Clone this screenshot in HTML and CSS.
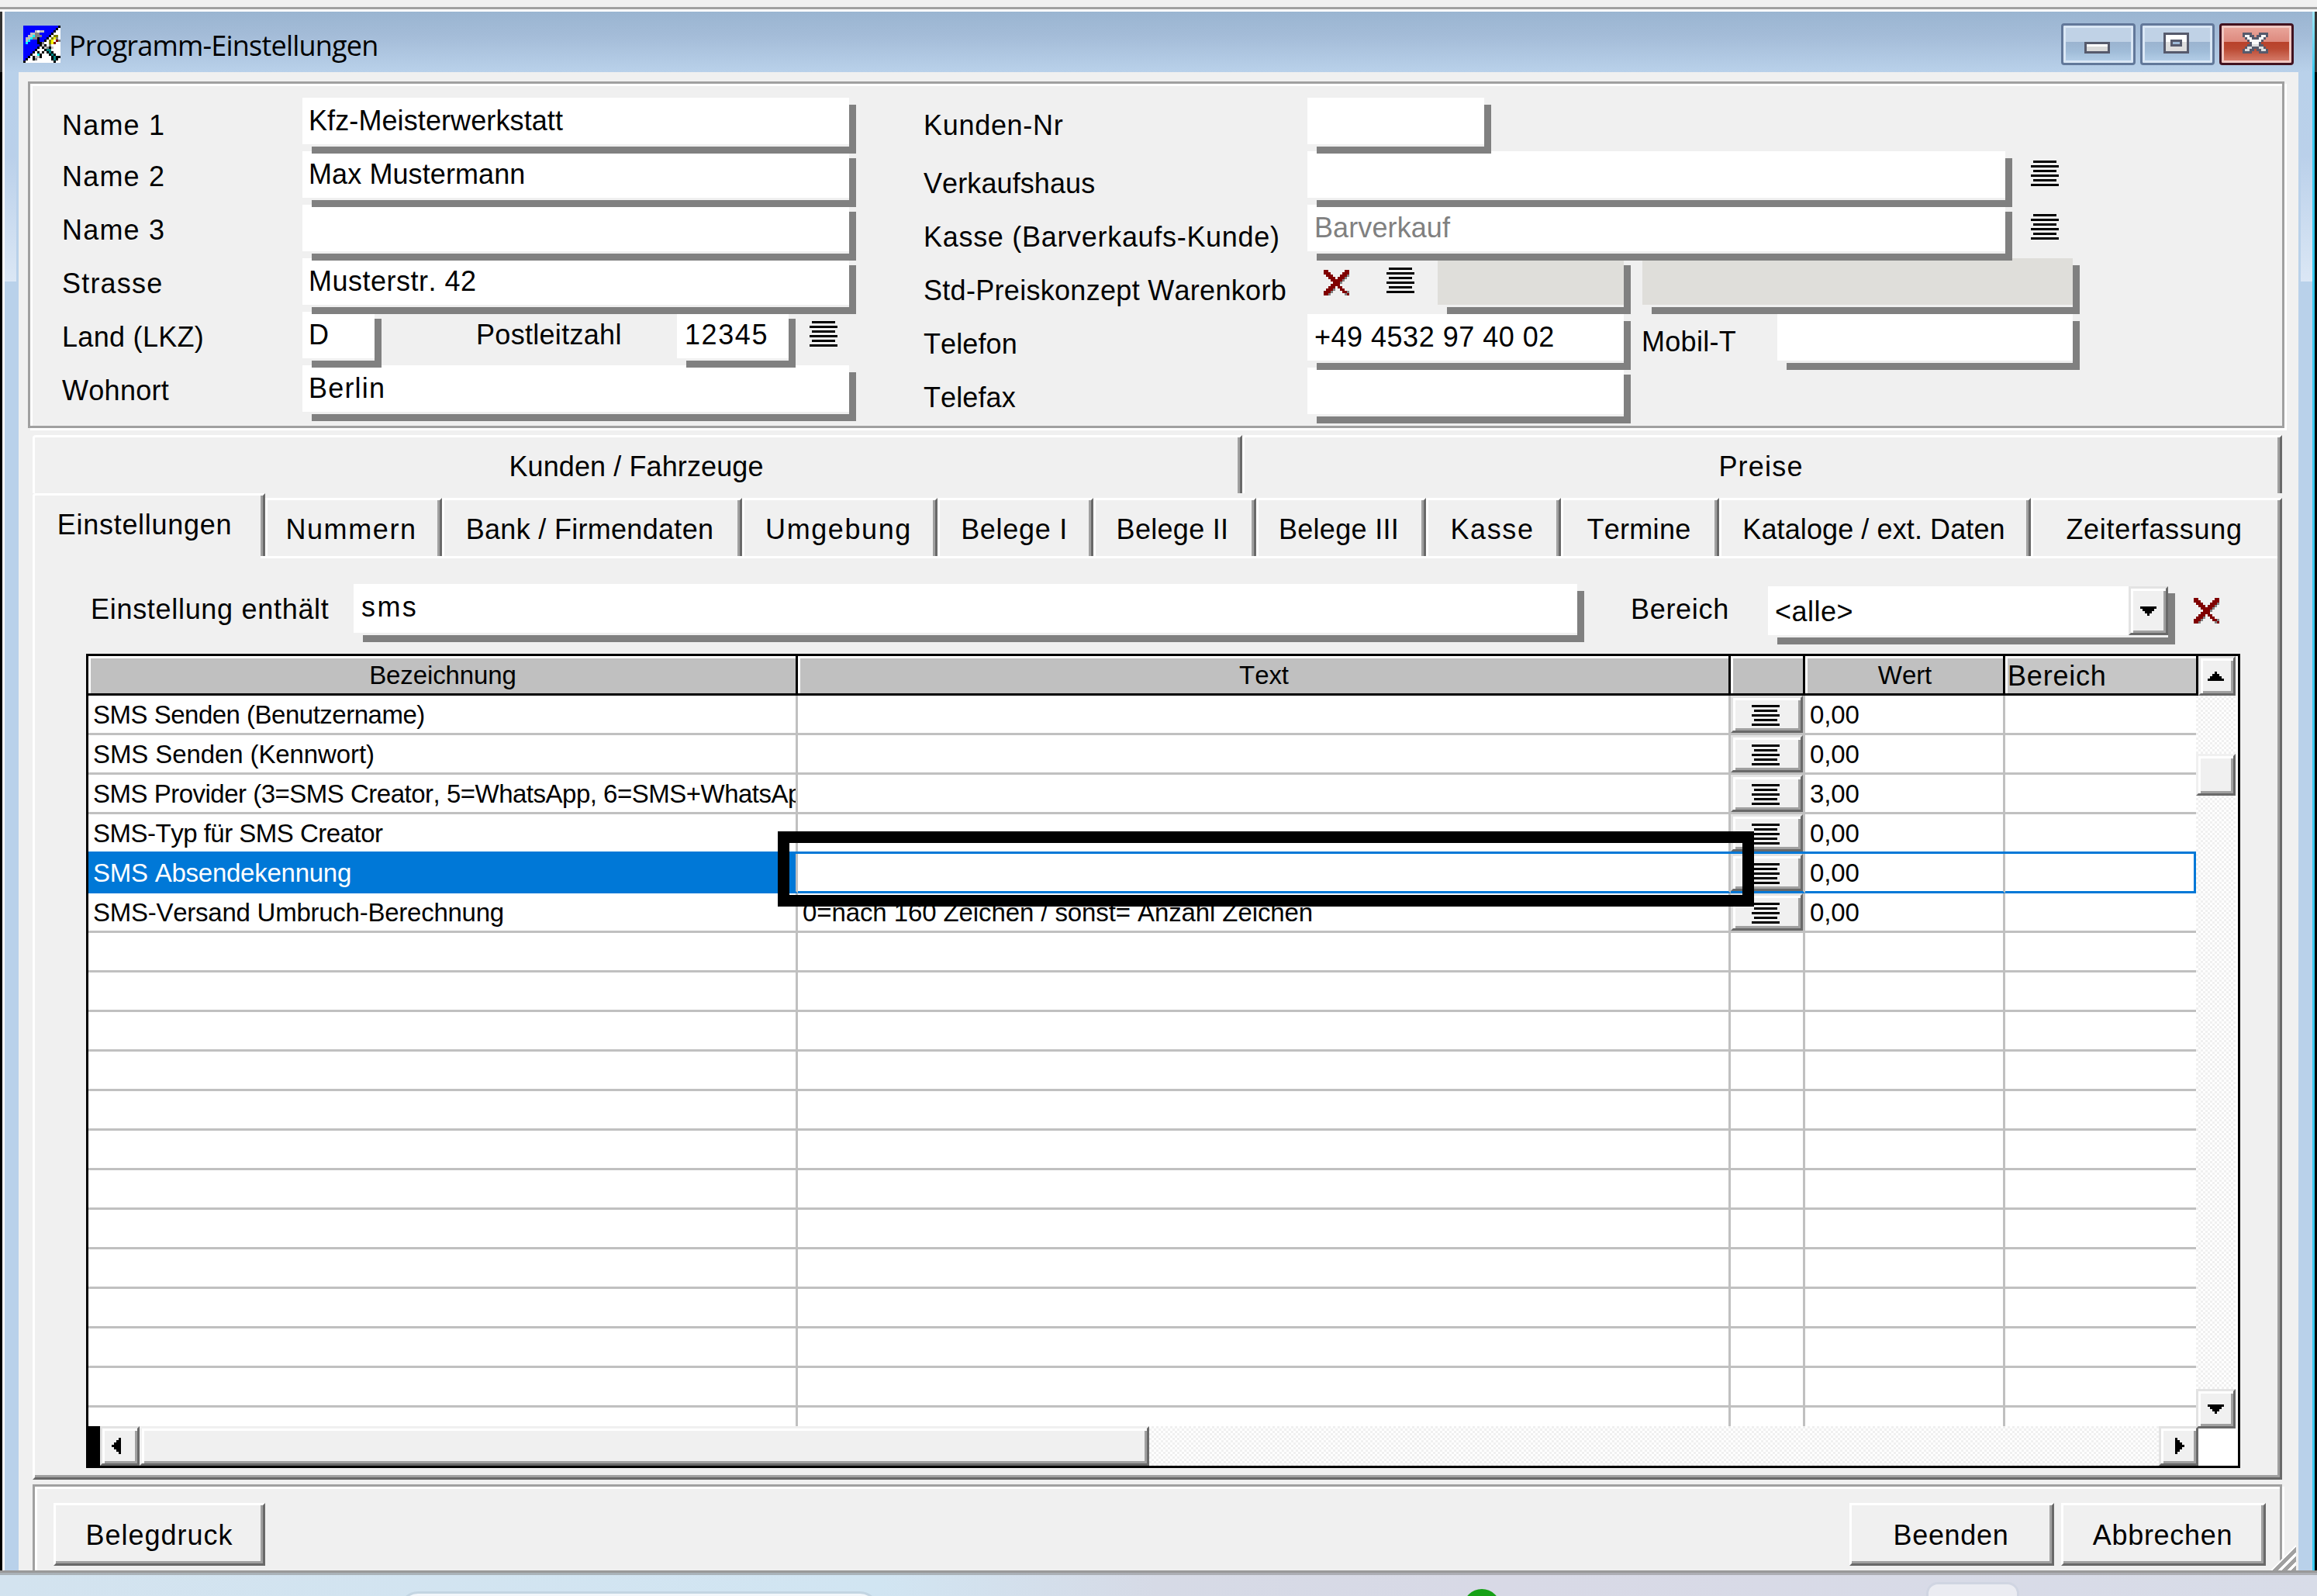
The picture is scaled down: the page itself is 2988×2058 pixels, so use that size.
FILE: index.html
```html
<!DOCTYPE html>
<html lang="de">
    <head>
        <meta charset="utf-8">
        <title>Programm-Einstellungen</title>
        <link rel="stylesheet" href="styles.css">
    </head>
    <body>
        <svg class="defs" width="0" height="0">
            <symbol id="list" viewBox="0 0 12 11">
                <path d="M1 0h10v1H1zM0 2h12v1H0zM1 4h10v1H1zM0 6h12v1H0zM1 8h10v1H1zM0 10h12v1H0z"/>
            </symbol>
            <symbol id="list5" viewBox="0 0 12 9">
                <path d="M0 0h12v1H0zM1 2h10v1H1zM0 4h12v1H0zM1 6h10v1H1zM0 8h12v1H0z"/>
            </symbol>
            <symbol id="cross" viewBox="0 0 11 11">
                <path fill="#808080" d="M10 2h1v1h-1v1h-1v1h-1v1H7V5h1V4h1V3h1zM7 7h1v1h1v1h2v1h-1v1H9v-1H8V9H7zM3 9h1v1H3v1H2v-1h1zM4 8h1v1H4z"/>
                <path fill="#800000" d="M0 0h2v1h1v1h1v1h1v1h1V3h1V2h1V1h1V0h2v2h-1v1H9v1H8v1H7v2h1v1h1v1h1v1h1v1h-1v-1H8V9H7V8H6V7H5v1H4v1H3v1H2v1H0V9h1V8h1V7h1V6h1V5H3V4H2V3H1V2H0z"/>
            </symbol>
        </svg>

        <div class="topedge"></div>
        <div class="window">
            <div class="titlebar">
                <svg class="appicon" viewBox="0 0 16 16" shape-rendering="crispEdges">
                    <path fill="#fff" d="M0 0h16v16H0z"/>
                    <path fill="#00f" d="M0 0h15v1h-1v1h-1v1h-1v1h-1v1h-1v1H9v1H8v1H7v1H6v1H5v1H4v1H3v1H2v1H1v1H0z"/>
                    <path d="M15 0h1v1h-1zM14 1h1v1h-1zM13 2h1v1h-1zM12 3h1v1h-1zM11 4h1v1h-1zM10 5h1v1h-1zM9 6h1v1H9zM8 7h1v1H8zM7 8h1v1H7zM6 9h1v1H6zM5 10h1v1H5zM4 11h1v1H4zM3 12h1v1H3zM2 13h1v1H2zM1 14h1v1H1zM0 15h1v1H0z"/>
                    <path fill="#c0c0c0" d="M5 2h4v1H5zM3 3h2v1H3zM2 4h2v1H2zM1 5h2v1H1zM1 6h1v1H1zM8 8h1v1H8zM9 9h1v1H9zM10 10h1v1h-1zM12 9h1v1h-1zM5 13h2v1H5z"/>
                    <path fill="#fff" d="M6 2h1v1H6z"/>
                    <path fill="#808080" d="M5 3h2v1h1v1h-1v2H6V6H4V5h1zM8 7h1v1H8zM11 8h1v1h-1zM10 9h1v1h-1zM5 14h1v1H5z"/>
                    <path fill="#0ff" d="M4 4h1v1H4zM3 5h1v1H3zM1 7h1v1H1zM2 6h1v1H2zM6 12h1v1H6z"/>
                    <path d="M6 5h1v2h1v1H6zM7 8h1v1H7zM8 9h1v1H8zM9 10h1v1H9zM10 11h1v1h-1zM11 12h1v1h-1zM12 13h1v1h-1zM12 14h1v1h-1zM9 8h1v1H9zM11 9h1v1h-1zM12 11h1v1h-1zM13 12h1v1h-1zM14 13h2v1h-2zM14 14h1v1h-1zM13 15h1v1h-1zM8 11h1v1H8zM7 12h1v1H7zM6 11h1v1H6zM4 13h1v2H4zM7 13h1v1H7z"/>
                    <path fill="#008080" d="M10 10h2v1h-2zM11 11h1v1h-1zM12 12h1v1h-1zM13 13h1v2h-1z"/>
                    <path fill="#808000" d="M13 4h2v1h-2zM12 5h1v1h-1zM11 6h1v2h-1z"/>
                    <path fill="#ff0" d="M13 5h1v1h-1zM12 6h1v2h-1z"/>
                    <path fill="#800000" d="M14 6h1v1h-1v1h-1V7h1z"/>
                    <path fill="#808080" d="M14 5h1v1h-1zM15 6h1v1h-1z"/>
                </svg>
                <span class="caption">Programm-Einstellungen</span>
                <div class="winbuttons">
                    <div class="winbutton">
                        <svg class="winglyph" viewBox="0 0 32 18">
                            <path fill="#565a6c" d="M10 8h11v5H10z"/>
                            <path fill="#fff" d="M11 9h9v1h-9z"/>
                            <path fill="#dadada" d="M11 10h9v2h-9z"/>
                        </svg>
                    </div>
                    <div class="winbutton">
                        <svg class="winglyph" viewBox="0 0 32 18">
                            <path fill="#565a6c" d="M10 4h11v9H10z"/>
                            <path fill="#fff" d="M11 5h9v3h-9z"/>
                            <path fill="#dedede" d="M11 8h9v4h-9z"/>
                            <path fill="#565a6c" d="M13 7h5v3h-5z"/>
                            <path fill="#9db9d6" d="M14 8h3v1h-3z"/>
                        </svg>
                    </div>
                    <div class="winbutton close">
                        <svg class="winglyph" viewBox="0 0 32 18" shape-rendering="crispEdges">
                            <path fill="#565a6c" d="M10 4h4v1h1v1h1V5h1V4h4v2h-1v1h-1v1h-1v1h1v1h1v1h1v2h-4v-1h-1v-1h-1v1h-1v1h-4v-2h1v-1h1V9h1V8h-1V7h-1V6h-1z"/>
                            <path fill="#fafafa" d="M11 5h2v1h1v1h3V6h1V5h2v1h-1v1h-1v1h-1v1h-3V8h-1V7h-1V6h-1z"/>
                            <path fill="#dedede" d="M14 9h3v1h1v1h2v1h-2v-1h-1v-1h-3v1h-1v1h-2v-1h2v-1h1zM17 10h2v1h1v1h-2v-1h-1zM12 10h2v1h-1v1h-2v-1h1z"/>
                        </svg>
                    </div>
                </div>
            </div>

            <div class="frame">
                <div class="side left"></div>
                <div class="client">
                    <div class="group">
                        <div class="form">
                            <div class="row"><label class="first ls3">Name 1</label><div class="field w705">Kfz-Meisterwerkstatt</div></div>
                            <div class="row"><label class="ls3">Name 2</label><div class="field w705">Max Mustermann</div></div>
                            <div class="row"><label class="ls3">Name 3</label><div class="field w705"></div></div>
                            <div class="row"><label class="ls3">Strasse</label><div class="field w705 ls2">Musterstr. 42</div></div>
                            <div class="row">
                                <label>Land (LKZ)</label><div class="field lkz">D</div>
                                <label class="plzlabel">Postleitzahl</label><div class="field plz ls4">12345</div>
                                <svg class="list plzlist"><use href="#list"/></svg>
                            </div>
                            <div class="row"><label>Wohnort</label><div class="field w705 ls3">Berlin</div></div>
                        </div>
                        <div class="form right">
                            <div class="row"><label class="first ls2">Kunden-Nr</label><div class="field w228"></div></div>
                            <div class="row"><label class="ls1">Verkaufshaus</label><div class="field w900"></div><svg class="list"><use href="#list"/></svg></div>
                            <div class="row"><label class="ls2">Kasse (Barverkaufs-Kunde)</label><div class="field w900 dim">Barverkauf</div><svg class="list"><use href="#list"/></svg></div>
                            <div class="row tall">
                                <label>Std-Preiskonzept Warenkorb</label>
                                <svg class="cross"><use href="#cross"/></svg>
                                <svg class="list stdlist"><use href="#list"/></svg>
                                <div class="field disabled w240"></div>
                                <div class="field disabled w555"></div>
                            </div>
                            <div class="row">
                                <label class="low ls1">Telefon</label><div class="field w408 ls-phone">+49 4532 97 40 02</div>
                                <label class="mobil">Mobil-T</label><div class="field w381"></div>
                            </div>
                            <div class="row"><label class="low ls1">Telefax</label><div class="field w408"></div></div>
                        </div>
                    </div>

                    <div class="tabs">
                        <div class="tabrow upper">
                            <div class="tab kunden ls1">Kunden / Fahrzeuge</div>
                            <div class="tab preise ls3">Preise</div>
                        </div>
                        <div class="tabrow lower">
                            <div class="tab active ls2">Einstellungen</div>
                            <div class="tab w228 ls4">Nummern</div>
                            <div class="tab w387">Bank / Firmendaten</div>
                            <div class="tab w252 ls4">Umgebung</div>
                            <div class="tab w201 ls2">Belege I</div>
                            <div class="tab w210">Belege II</div>
                            <div class="tab w219">Belege III</div>
                            <div class="tab w174 ls4">Kasse</div>
                            <div class="tab w204">Termine</div>
                            <div class="tab w402 ls1">Kataloge / ext. Daten</div>
                            <div class="tab w324 ls2">Zeiterfassung</div>
                        </div>
                    </div>

                    <div class="pane">
                        <div class="filter">
                            <label class="ls2">Einstellung enthält</label>
                            <div class="field search">sms</div>
                            <label class="bereich ls2">Bereich</label>
                            <div class="field combo">&lt;alle&gt;
                                <div class="btn3d drop"><svg class="arrow" viewBox="0 0 7 4"><path d="M0 0h7v1H6v1H5v1H4v1H3V3H2V2H1V1H0z"/></svg></div>
                            </div>
                            <svg class="cross"><use href="#cross"/></svg>
                        </div>

                        <div class="grid">
                            <div class="gridtop">
                                <div class="rows">
                                    <table class="settings">
                                        <colgroup><col class="c1"><col class="c2"><col class="c3"><col class="c4"><col class="c5"></colgroup>
                                        <thead>
                                            <tr><th>Bezeichnung</th><th>Text</th><th></th><th>Wert</th><th class="last">Bereich</th></tr>
                                        </thead>
                                        <tbody>
                                            <tr><td class="tight">SMS Senden (Benutzername)</td><td></td><td class="pick"><div class="btn3d"><svg class="list5"><use href="#list5"/></svg></div></td><td>0,00</td><td></td></tr>
                                            <tr><td>SMS Senden (Kennwort)</td><td></td><td class="pick"><div class="btn3d"><svg class="list5"><use href="#list5"/></svg></div></td><td>0,00</td><td></td></tr>
                                            <tr><td class="tight">SMS Provider (3=SMS Creator, 5=WhatsApp, 6=SMS+WhatsAp</td><td></td><td class="pick"><div class="btn3d"><svg class="list5"><use href="#list5"/></svg></div></td><td>3,00</td><td></td></tr>
                                            <tr><td class="tight">SMS-Typ für SMS Creator</td><td></td><td class="pick"><div class="btn3d"><svg class="list5"><use href="#list5"/></svg></div></td><td>0,00</td><td></td></tr>
                                            <tr class="selected"><td class="snug">SMS Absendekennung</td><td></td><td class="pick"><div class="btn3d"><svg class="list5"><use href="#list5"/></svg></div></td><td>0,00</td><td></td></tr>
                                            <tr><td class="snug">SMS-Versand Umbruch-Berechnung</td><td>0=nach 160 Zeichen / sonst= Anzahl Zeichen</td><td class="pick"><div class="btn3d"><svg class="list5"><use href="#list5"/></svg></div></td><td>0,00</td><td></td></tr>
                                            <tr><td></td><td></td><td></td><td></td><td></td></tr>
                                            <tr><td></td><td></td><td></td><td></td><td></td></tr>
                                            <tr><td></td><td></td><td></td><td></td><td></td></tr>
                                            <tr><td></td><td></td><td></td><td></td><td></td></tr>
                                            <tr><td></td><td></td><td></td><td></td><td></td></tr>
                                            <tr><td></td><td></td><td></td><td></td><td></td></tr>
                                            <tr><td></td><td></td><td></td><td></td><td></td></tr>
                                            <tr><td></td><td></td><td></td><td></td><td></td></tr>
                                            <tr><td></td><td></td><td></td><td></td><td></td></tr>
                                            <tr><td></td><td></td><td></td><td></td><td></td></tr>
                                            <tr><td></td><td></td><td></td><td></td><td></td></tr>
                                            <tr><td></td><td></td><td></td><td></td><td></td></tr>
                                            <tr><td></td><td></td><td></td><td></td><td></td></tr>
                                        </tbody>
                                    </table>
                                </div>
                                <div class="vscroll">
                                    <div class="upcell"><div class="btn3d"><svg class="arrow" viewBox="0 0 7 4"><path d="M3 0h1v1h1v1h1v1h1v1H0V3h1V2h1V1h1z"/></svg></div></div>
                                    <div class="btn3d thumb"></div>
                                    <div class="btn3d down"><svg class="arrow" viewBox="0 0 7 4"><path d="M0 0h7v1H6v1H5v1H4v1H3V3H2V2H1V1H0z"/></svg></div>
                                </div>
                            </div>
                            <div class="hscroll">
                                <div class="splitter"></div>
                                <div class="btn3d"><svg class="arrow left-arrow" viewBox="0 0 4 7"><path d="M3 0h1v7H3V6H2V5H1V4H0V3h1V2h1V1h1z"/></svg></div>
                                <div class="btn3d thumb"></div>
                                <div class="track"></div>
                                <div class="btn3d"><svg class="arrow right-arrow" viewBox="0 0 4 7"><path d="M0 0h1v1h1v1h1v1h1v1H3v1H2v1H1v1H0z"/></svg></div>
                            </div>
                            <div class="marker"></div>
                        </div>
                    </div>

                    <div class="footer">
                        <div class="button belegdruck ls2">Belegdruck</div>
                        <div class="button ls2">Beenden</div>
                        <div class="button ls2">Abbrechen</div>
                    </div>
                    <svg class="grip" viewBox="0 0 11 11" shape-rendering="crispEdges">
                        <path stroke="#fff" d="M0 11L11 0M4 11l7-7M8 11l3-3"/>
                        <path stroke="#a0a0a0" stroke-width="1.5" d="M1.5 11.5l10-10M5.5 11.5l6-6M9.5 11.5l2-2"/>
                    </svg>
                </div>
                <div class="side"></div>
            </div>
        </div>

        <div class="taskbar">
            <div class="searchpill"></div>
            <div class="dot"></div>
            <div class="taskitem"></div>
        </div>
    </body>
</html>
```
FILE: styles.css
```css
* { box-sizing: border-box; }

body {
    margin: 0;
    width: 2988px;
    height: 2058px;
    overflow: hidden;
    background-color: #f0f0f0;
    font: 36px/60px "Liberation Sans", Arial, sans-serif;
    font-kerning: none;
    letter-spacing: 0.3px;
    color: #000;
    white-space: nowrap;
}

svg { display: block; flex: none; }
.defs { position: absolute; }

.ls1 { letter-spacing: 0.1px; }
.ls2 { letter-spacing: 0.7px; }
.ls3 { letter-spacing: 1.2px; }
.ls4 { letter-spacing: 1.6px; }

/* window frame */
.topedge {
    height: 15px;
    border-bottom: 3px solid #fff;
    box-shadow: inset 0 -3px #a0a0a0;
}

.window {
    height: 2010px;
    padding: 0 6px;
    background:
        linear-gradient(#333 78px, #000 78px) 0 0 / 3px 100% no-repeat,
        linear-gradient(#fff, #fff) 3px 0 / 3px 100% no-repeat,
        linear-gradient(#9ee6f4, #38c8ee 78px) 2982px 0 / 3px 100% no-repeat,
        linear-gradient(#333 78px, #000 78px) 2985px 0 / 3px 100% no-repeat;
}

.titlebar {
    display: flex;
    height: 78px;
    padding-left: 24px;
    background: linear-gradient(#9ab5d1, #a4bcd8 40%, #b9d1ea);
}
.appicon { width: 48px; height: 48px; margin-top: 18px; }
.caption {
    margin: 14px 0 0 11px;
    font-family: "Open Sans", "Noto Sans", sans-serif;
    font-size: 36px;
    line-height: 60px;
    letter-spacing: -0.8px;
}
.winbuttons { display: flex; gap: 6px; margin: 15px 24px 0 auto; }
.winbutton {
    width: 96px;
    height: 54px;
    border: 3px solid #62789a;
    border-radius: 4px;
    box-shadow: inset 0 0 0 3px #dae7f5;
    background: linear-gradient(#c0d2e6 0 21px, #9ab3cf 21px, #a0bcd8 33px, #b7d1ea);
}
.winglyph { width: 96px; height: 54px; margin: -3px; }
.winbutton.close {
    border-color: #42121f;
    box-shadow: inset 0 0 0 3px #f0c8c2;
    background: linear-gradient(#eaa89e, #dd8a7e 21px, #b8412a 21px, #bb4a33 30px, #d98372);
}

.frame { display: flex; height: 1932px; }
.side {
    width: 18px;
    background:
        linear-gradient(#b9d1ea, #bad0ea 40%, #dbe7f5) 3px 0 / 15px 270px no-repeat,
        #b9d1ea;
}
.side.left { background-position: 0 0, 0 0; }
.client {
    position: relative;
    width: 2940px;
    padding-top: 12px;
    background-color: #f0f0f0;
}

/* address block */
.group {
    display: flex;
    width: 2910px;
    height: 447px;
    margin-left: 12px;
    padding: 18px 0 0 39px;
    border: 3px solid #a0a0a0;
    box-shadow: inset 3px 3px #fff, 3px 3px #fff;
}
.form { flex: none; width: 1111px; }
.form.right { width: 1700px; }
.row { display: flex; align-items: flex-start; height: 69px; }
.row > * { flex: none; }
.row.tall { height: 72px; }
.row label { width: 312px; padding: 3px 0 0 2px; }
.row label.first { padding-top: 6px; }
.right .row label { width: 497px; padding-top: 12px; }
.right .row label.first { padding-top: 6px; }
.right .row label.low { padding-top: 9px; }
.row label.plzlabel { width: 261px; margin-left: 129px; padding-top: 0; }
.right .row label.mobil { width: 177px; margin-left: 21px; padding-top: 6px; }

.field {
    position: relative;
    height: 60px;
    padding-left: 8px;
    background-color: #fff;
}
/* drop shadow set off from the field, lies over the next row */
.field::after {
    content: "";
    position: absolute;
    z-index: 1;
    left: 12px;
    right: -9px;
    top: 9px;
    bottom: -12px;
    background:
        linear-gradient(#808080, #808080) 100% 0 / 9px 100% no-repeat,
        linear-gradient(#808080, #808080) 0 100% / 100% 9px no-repeat;
}
.field.w705 { letter-spacing: 0.1px; }
.field.w705.ls2 { letter-spacing: 0.5px; }
.field.w705.ls3 { letter-spacing: 1.2px; }
.right .field { padding-left: 9px; }
.field.dim { color: #808080; letter-spacing: 0.1px; }
.ls-phone { letter-spacing: 0.5px; }
.field.disabled { background-color: #dfdeda; }
.field.lkz { width: 93px; }
.field.plz { width: 144px; padding-left: 10px; }
.w705 { width: 705px; }
.w900 { width: 900px; }
.w240 { width: 240px; }
.w555 { width: 555px; margin-left: 24px; }
.w408 { width: 408px; }
.w381 { width: 381px; }

.list { width: 36px; height: 33px; margin: 12px 0 0 33px; }
.plzlist { margin-left: 27px; }
.stdlist { margin: 12px 30px 0 48px; }
.cross { width: 33px; height: 33px; margin: 15px 0 0 21px; }

/* tabs */
.tabs { margin: 9px 0 0 18px; width: 2901px; }
.tabrow { display: flex; align-items: flex-end; }
.tab {
    height: 75px;
    padding: 8px 3px 0 0;
    text-align: center;
    border-top: 3px solid #fff;
    border-right: 3px solid #696969;
    box-shadow: inset -3px 0 #a0a0a0;
}
.upper .tab { border-left: 3px solid #fff; border-top-left-radius: 4px; }
.kunden { width: 1560px; }
.preise { width: 1341px; }
.lower .tab { box-shadow: inset -3px 0 #a0a0a0, inset 3px 0 #fff; }
.lower .tab.active {
    width: 300px;
    height: 81px;
    border-left: 3px solid #fff;
    border-top-left-radius: 4px;
    padding: 8px 11px 0 0;
    box-shadow: inset -3px 0 #a0a0a0;
}
.w228 { width: 228px; }
.w387 { width: 387px; }
.w252 { width: 252px; }
.w201 { width: 201px; }
.w210 { width: 210px; }
.w219 { width: 219px; }
.w174 { width: 174px; }
.w204 { width: 204px; }
.w402 { width: 402px; }
.w324 { width: 324px; }
.lower .w252, .lower .w201, .lower .w174, .lower .w204, .lower .w402 { padding-right: 0; }

.pane {
    width: 2901px;
    height: 1191px;
    margin-left: 18px;
    padding-top: 36px;
    border: 3px solid #696969;
    border-left-color: #fff;
    border-top: 0;
    box-shadow: inset -3px -3px #a0a0a0;
    background: linear-gradient(#fff, #fff) 291px 0 / 2601px 3px no-repeat;
}

.filter { display: flex; align-items: flex-start; height: 90px; padding-left: 69px; }
.filter label { width: 342px; padding: 3px 0 0 3px; }
.filter label.bereich { width: 180px; margin-left: 66px; }
.field.search { width: 1578px; height: 63px; padding-left: 10px; letter-spacing: 2.4px; }
.field.combo {
    display: flex;
    justify-content: space-between;
    width: 516px;
    height: 63px;
    margin-top: 3px;
    padding-left: 9px;
    line-height: 66px;
    letter-spacing: 0.5px;
}
.filter .cross { margin: 18px 0 0 33px; }

.btn3d {
    display: flex;
    align-items: center;
    justify-content: center;
    width: 51px;
    height: 51px;
    border: 3px solid #696969;
    border-top-color: #e3e3e3;
    border-left-color: #e3e3e3;
    background-color: #f0f0f0;
    box-shadow: inset 3px 3px #fff, inset -3px -3px #a0a0a0;
}
.btn3d.drop { height: 63px; }
.arrow { width: 21px; height: 12px; }
.left-arrow { width: 12px; height: 21px; margin-right: 9px; }
.right-arrow { width: 12px; height: 21px; margin-left: 3px; }

/* settings grid */
.grid {
    position: relative;
    width: 2778px;
    height: 1050px;
    margin-left: 66px;
    border: 3px solid #000;
    background-color: #fff;
}
.gridtop { display: flex; height: 993px; }
.rows { width: 2718px; overflow: hidden; }
.settings {
    table-layout: fixed;
    width: 2718px;
    border-spacing: 0;
    font-size: 33px;
    line-height: 46px;
    letter-spacing: -0.1px;
}
.c1 { width: 915px; }
.c2 { width: 1203px; }
.c3 { width: 96px; }
.c4 { width: 258px; }
.c5 { width: 246px; }
.settings th {
    height: 51px;
    padding: 2px 0 0 2px;
    font-weight: normal;
    background-color: #c0c0c0;
    border-right: 3px solid #000;
    border-bottom: 3px solid #000;
    box-shadow: inset 3px 3px #fff;
}
.settings th.last {
    padding: 3px 0 0 3px;
    border-right: 0;
    background-color: #c6c6c6;
    font-size: 36px;
    line-height: 45px;
    letter-spacing: 0.8px;
    text-align: left;
}
.settings td {
    height: 51px;
    padding: 2px 0 0 6px;
    overflow: hidden;
    border-right: 3px solid #c0c0c0;
    border-bottom: 3px solid #c0c0c0;
}
.settings td:last-child { border-right: 0; }
.settings td.snug { letter-spacing: -0.25px; }
.settings td.tight { letter-spacing: -0.5px; }
.settings td.pick { padding: 0; }
.settings .btn3d { width: 93px; height: 48px; }
.list5 { width: 36px; height: 27px; margin: 3px 3px 0 0; }
.settings .selected td { border-bottom-color: #0078d7; box-shadow: 0 -3px #0078d7; }
.settings .selected td:first-child { background-color: #0078d7; color: #fff; }
.settings .selected td:last-child { border-right: 3px solid #0078d7; }

.vscroll {
    display: flex;
    flex-direction: column;
    width: 51px;
    height: 996px;
    background: repeating-conic-gradient(#f0f0f0 0 25%, #fff 0 50%) 0 0 / 6px 6px;
}
.upcell { height: 51px; border-left: 3px solid #000; }
.upcell .btn3d { width: 48px; }
.upcell .arrow { margin-right: 3px; }
.thumb { border-top-color: #f0f0f0; border-left-color: #f0f0f0; }
.vscroll .thumb { height: 54px; margin-top: 75px; }
.vscroll .down { margin-top: auto; }

.hscroll { display: flex; height: 51px; width: 2721px; }
.splitter { width: 15px; background-color: #000; }
.hscroll .thumb { width: 1302px; }
.track { flex: 1; background: repeating-conic-gradient(#f0f0f0 0 25%, #fff 0 50%) 0 0 / 6px 6px; }

.marker {
    position: absolute;
    left: 889px;
    top: 226px;
    width: 1259px;
    height: 97px;
    border: 15px solid #000;
}

/* bottom buttons */
.footer {
    display: flex;
    gap: 9px;
    width: 2901px;
    height: 111px;
    margin: 6px 0 0 18px;
    padding: 21px 18px 0 24px;
    border: 3px solid #a0a0a0;
    border-bottom: 0;
    box-shadow: inset 3px 3px #fff, 3px 3px #fff;
}
.button {
    width: 264px;
    height: 81px;
    padding-right: 2px;
    text-align: center;
    line-height: 77px;
    border: 3px solid #696969;
    border-top-color: #fff;
    border-left-color: #fff;
    box-shadow: inset -3px -3px #a0a0a0;
}
.belegdruck { width: 273px; margin-right: auto; padding-right: 0; letter-spacing: 1px; }
.grip { position: absolute; right: 3px; bottom: 0; width: 33px; height: 33px; background-color: #f0f0f0; clip-path: polygon(0 100%, 100% 0, 100% 100%); }

.taskbar {
    display: flex;
    position: relative;
    height: 33px;
    border-top: 3px solid #999;
    box-shadow: inset 0 3px rgba(130, 130, 130, 0.5);
    background: linear-gradient(90deg, #d3e3ef, #d1e5f2 38%, #d6dae6 50%, #d8d9e6 65%, #d8dce8);
}
.searchpill {
    width: 618px;
    height: 60px;
    margin: 24px 0 0 515px;
    border: 3px solid #c3d5e2;
    border-radius: 24px;
    background-color: #f3f7fb;
}
.dot { width: 48px; height: 48px; margin: 21px 0 0 754px; border-radius: 50%; background-color: #16a016; }
.taskitem {
    width: 114px;
    height: 60px;
    margin: 15px 0 0 552px;
    border-radius: 12px;
    background-color: #ebecf2;
    box-shadow: 0 0 0 3px #d0d5e2;
}
```
